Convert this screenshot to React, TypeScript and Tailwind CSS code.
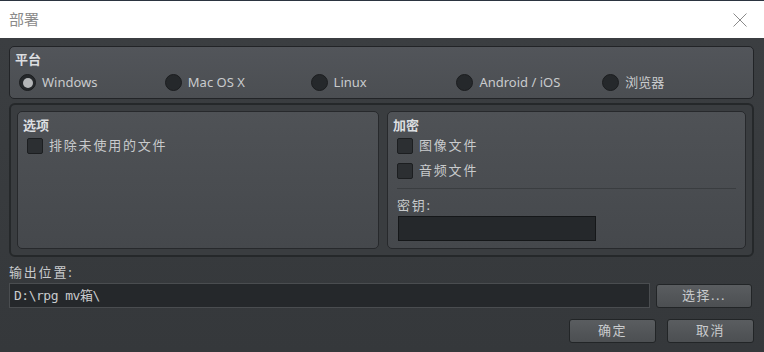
const font = { fontFamily: '"Noto Sans", "Noto Sans CJK SC", sans-serif' }

function Radio({ label, checked }: { label: string; checked?: boolean }) {
  return (
    <div className="flex items-center gap-[6px] w-[146px]">
      <span className="w-[17px] h-[17px] rounded-full bg-[#25282b] border border-[#1b1d1f] flex items-center justify-center shrink-0">
        {checked && <span className="w-[10px] h-[10px] rounded-full bg-[#b4b6b8]" />}
      </span>
      <span className="text-[13px] text-[#c9cbcd]">{label}</span>
    </div>
  )
}

function Check({ label }: { label: string }) {
  return (
    <div className="flex items-center gap-[6px] h-[16px]">
      <span className="w-[16px] h-[16px] rounded-[2px] bg-[#2c2f32] border border-[#1c1e20] shrink-0" />
      <span className="text-[13px] text-[#c9cbcd] tracking-[1.8px]">{label}</span>
    </div>
  )
}

function Btn({ children, w }: { children: React.ReactNode; w: string }) {
  return (
    <button className={`${w} h-[24px] rounded-[3px] border border-[#222527] bg-gradient-to-b from-[#5a5d60] to-[#4c4f52] text-[13px] text-[#c9cbcd] tracking-[1.5px]`}>
      {children}
    </button>
  )
}

export default function App() {
  return (
    <div className="w-[764px] h-[352px] bg-[#383b3e] flex flex-col overflow-hidden" style={font}>
      <div className="h-[1px] bg-[#2b3440]" />
      {/* title bar */}
      <div className="h-[37px] bg-white flex items-center justify-between pl-[9px] pr-[17px]">
        <span className="text-[15px] text-[#8a8a8a]">部署</span>
        <svg width="14" height="14" viewBox="0 0 14 14">
          <path d="M0.5 0.5 L13.5 13.5 M13.5 0.5 L0.5 13.5" stroke="#8a8a8a" strokeWidth="1" />
        </svg>
      </div>

      <div className="flex-1 bg-gradient-to-b from-[#3b3e41] to-[#35383b] pl-[9px] pr-[10px] pt-[8px]">
        {/* platform */}
        <div className="h-[53px] rounded-[5px] border border-[#222427] bg-gradient-to-b from-[#52555a] to-[#4b4e52] px-[5px] pt-[3px]">
          <div className="text-[13px] font-bold text-[#dcdee0] leading-[18px]">平台</div>
          <div className="flex items-center mt-[5px] pl-[4px]">
            <Radio label="Windows" checked />
            <Radio label="Mac OS X" />
            <Radio label="Linux" />
            <Radio label="Android / iOS" />
            <Radio label="浏览器" />
          </div>
        </div>

        {/* options + encryption */}
        <div className="mt-[4px] h-[154px] rounded-[6px] border-[2px] border-[#25282a] bg-[#3a3d40] p-[6px] flex gap-[8px]">
          <div className="w-[362px] rounded-[5px] border border-[#27292c] bg-gradient-to-b from-[#4f5256] to-[#45484c] px-[5px] pt-[4px]">
            <div className="text-[13px] font-bold text-[#dcdee0] leading-[18px]">选项</div>
            <div className="mt-[4px] pl-[4px]">
              <Check label="排除未使用的文件" />
            </div>
          </div>
          <div className="flex-1 rounded-[5px] border border-[#27292c] bg-gradient-to-b from-[#4f5256] to-[#45484c] px-[5px] pt-[4px]">
            <div className="text-[13px] font-bold text-[#dcdee0] leading-[18px]">加密</div>
            <div className="mt-[4px] pl-[4px] flex flex-col gap-[9px]">
              <Check label="图像文件" />
              <Check label="音频文件" />
            </div>
            <div className="mt-[9px] mx-[4px] h-px bg-[#3a3d40]" />
            <div className="mt-[8px] pl-[4px] text-[13px] text-[#c9cbcd] leading-[16px] tracking-[1.8px]">密钥:</div>
            <div className="mt-[3px] ml-[5px] w-[198px] h-[25px] bg-[#25282b] border border-[#151719]" />
          </div>
        </div>

        {/* output */}
        <div className="mt-[6px] text-[13px] text-[#c9cbcd] leading-[18px] tracking-[1.8px]">输出位置:</div>
        <div className="mt-[2px] flex items-center gap-[6px]">
          <div className="w-[641px] h-[25px] bg-[#25282b] border border-[#4a4d50] flex items-center px-[4px] text-[13px] text-[#c9cbcd]" style={{ fontFamily: '"DejaVu Sans Mono", "Noto Sans CJK SC", monospace', letterSpacing: '-0.5px' }}>
            D:\rpg mv箱\
          </div>
          <Btn w="w-[96px]">选择...</Btn>
        </div>
        <div className="mt-[11px] flex justify-end gap-[11px]">
          <Btn w="w-[87px]">确定</Btn>
          <Btn w="w-[87px]">取消</Btn>
        </div>
      </div>
    </div>
  )
}
